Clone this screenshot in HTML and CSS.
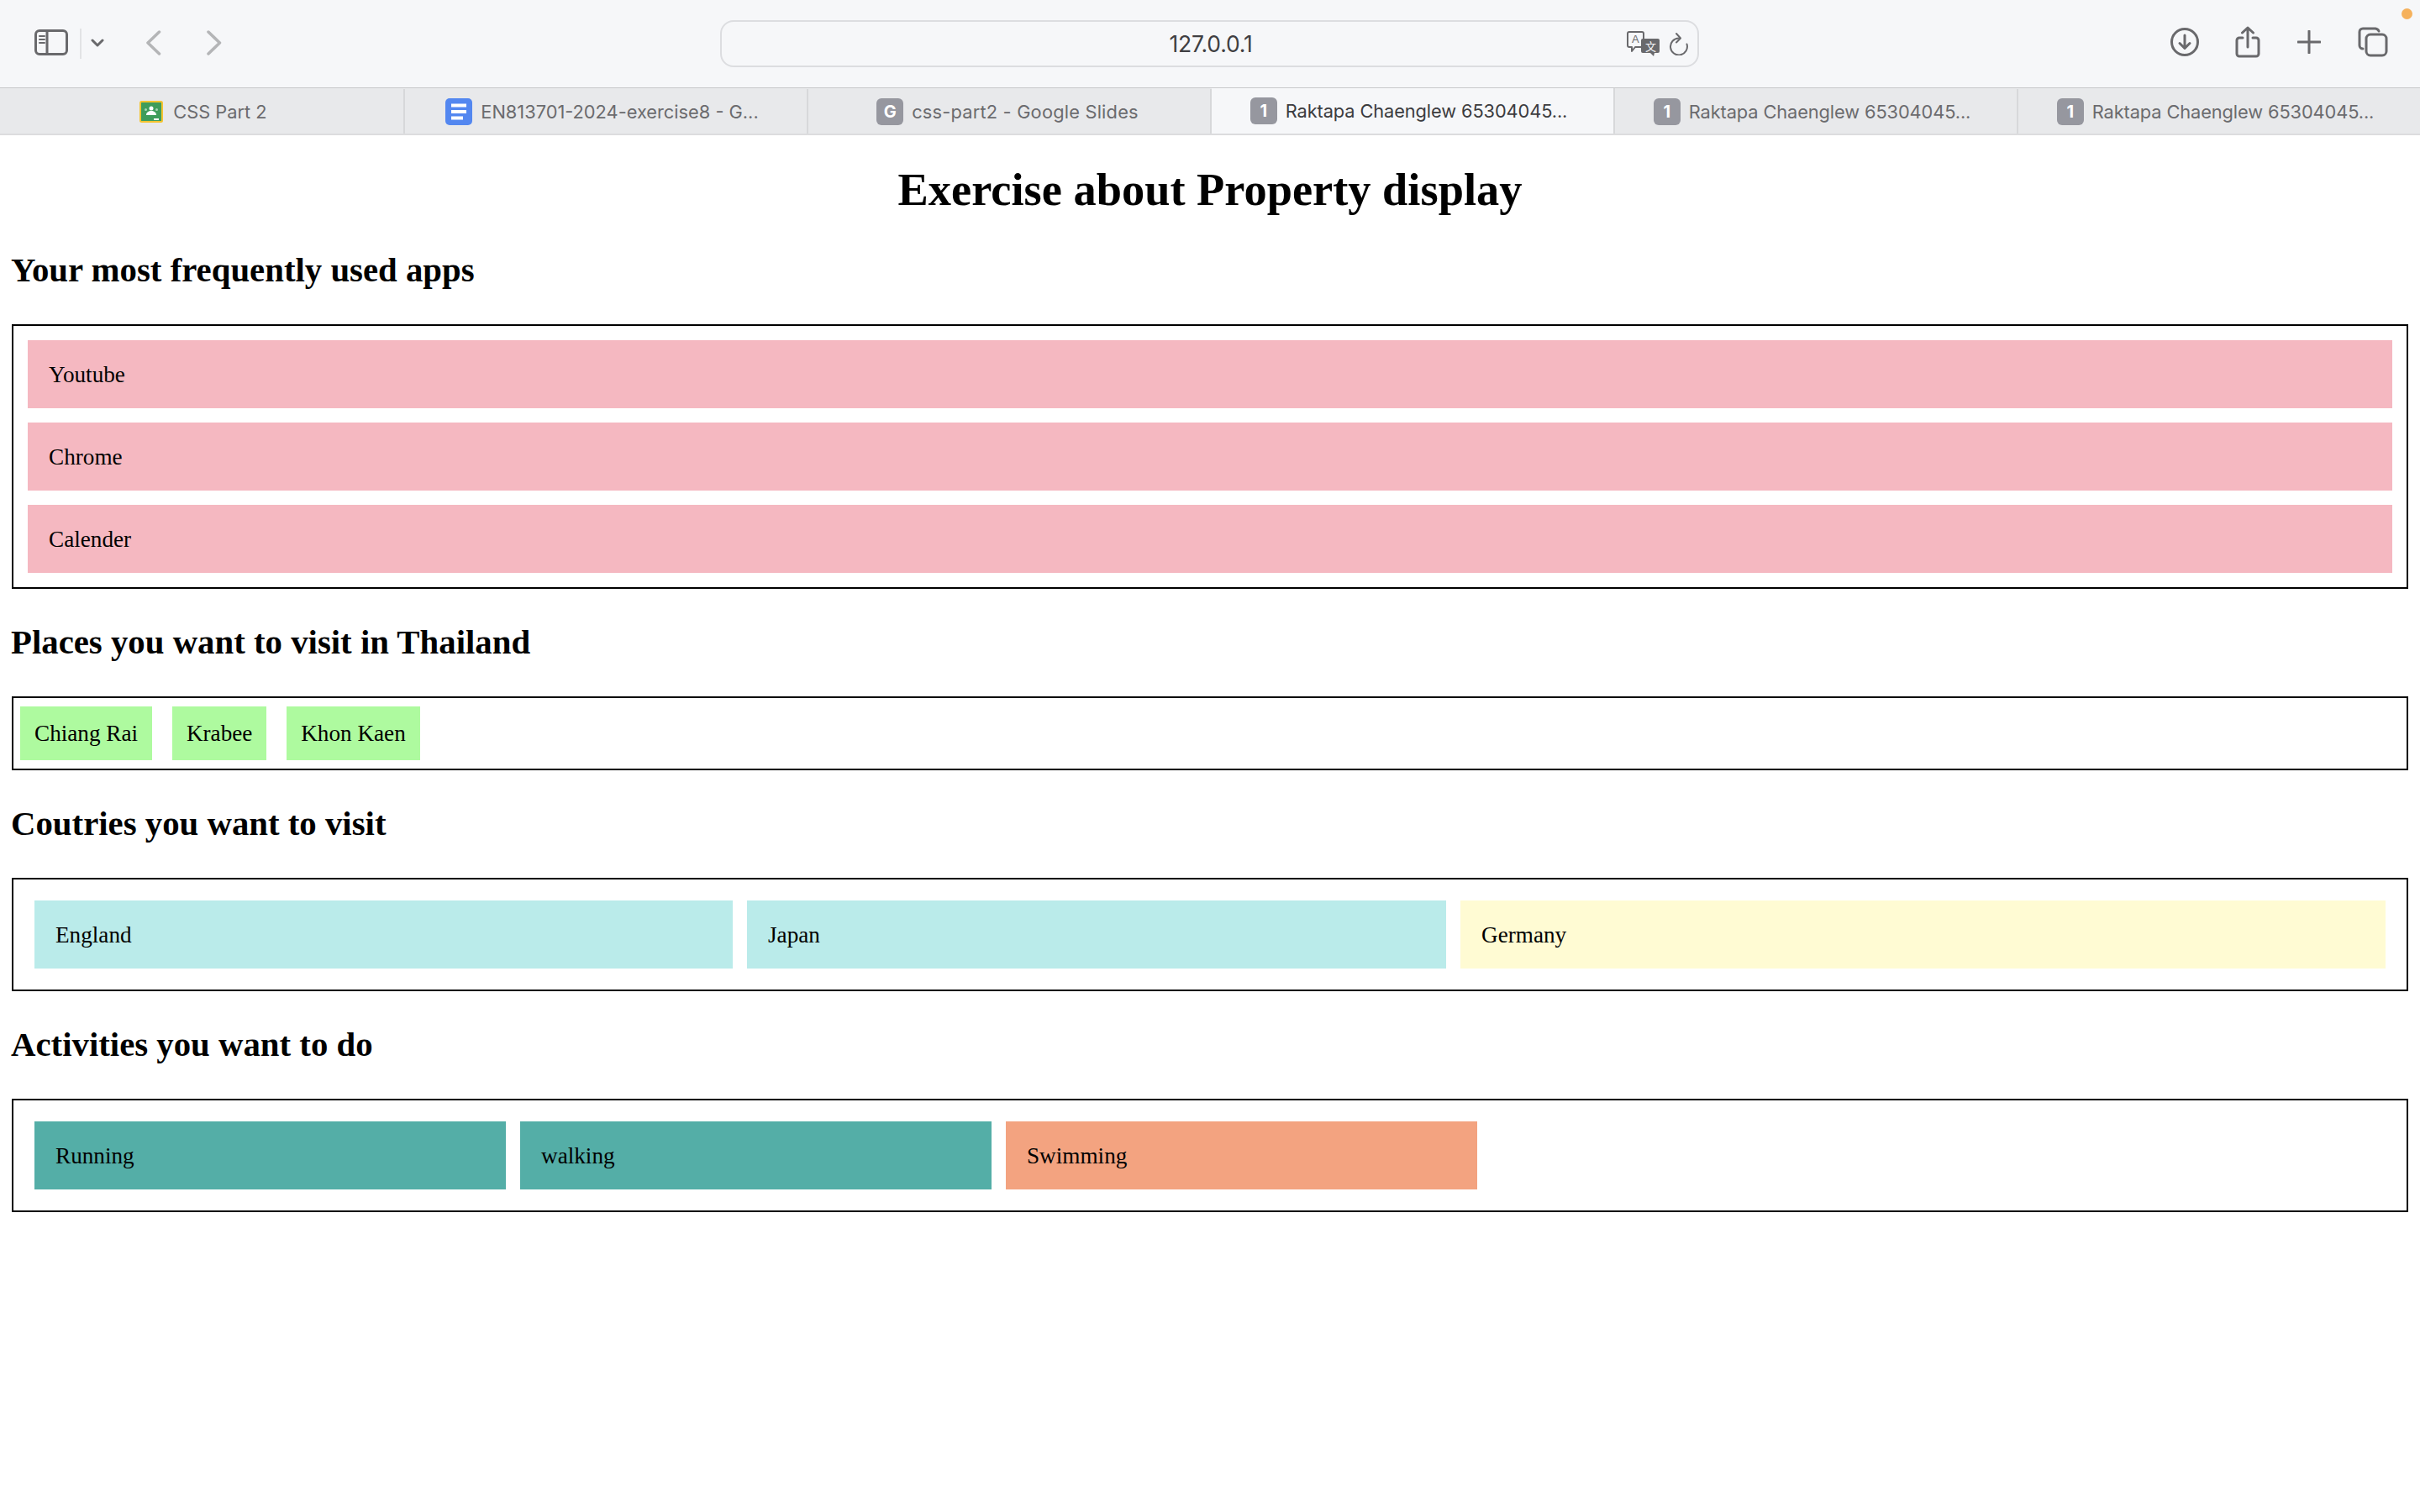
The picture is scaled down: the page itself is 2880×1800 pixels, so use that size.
FILE: index.html
```html
<!DOCTYPE html>
<html lang="en">
<head>
<meta charset="utf-8">
<title>Exercise about Property display</title>
<link rel="stylesheet" href="styles.css">
</head>
<body>
<header class="toolbar">
  <div class="nav">
    <svg class="ic-sidebar" width="40" height="31" viewBox="0 0 40 31"><rect x="1.5" y="1.5" width="37" height="28" rx="4.5" class="st"/><path d="M15 2v27" class="st"/><path d="M6 8h6M6 12h6M6 16h6" class="st thin"/></svg>
    <span class="divider"></span>
    <svg class="ic-chevron" width="16" height="10" viewBox="0 0 16 10"><path d="M2 2l6 6 6-6" class="st"/></svg>
    <svg class="ic-back" width="18" height="30" viewBox="0 0 18 30"><path d="M15.500 2L2 15l13.500 13" class="st dim"/></svg>
    <svg class="ic-forward" width="18" height="30" viewBox="0 0 18 30"><path d="M2 2l13.500 13L2 28" class="st dim"/></svg>
  </div>
  <div class="urlbar">
    <span class="url">127.0.0.1</span>
    <svg class="ic-translate" width="40" height="30" viewBox="0 0 40 30"><path d="M3 1h15a2 2 0 0 1 2 2v14a2 2 0 0 1-2 2h-8l-4 5v-5H3a2 2 0 0 1-2-2V3a2 2 0 0 1 2-2z" class="st thin"/><text x="6" y="14" class="tr-a">A</text><path d="M19 9h18a2 2 0 0 1 2 2v13a2 2 0 0 1-2 2h-4l-1 4-4-4h-9a2 2 0 0 1-2-2V11a2 2 0 0 1 2-2z" class="fill"/><text x="22" y="23" class="tr-b">文</text></svg>
    <svg class="ic-reload" width="24" height="28" viewBox="0 0 24 28"><path d="M12 7.500a10 10 0 1 0 9.500 7" class="st thin"/><path d="M9 2l5 5.500-5 5" class="st thin"/></svg>
  </div>
  <div class="actions">
    <svg class="ic-download" width="36" height="36" viewBox="0 0 36 36"><circle cx="18" cy="18" r="15.5" class="st"/><path d="M18 10v15M12 19.500l6 6 6-6" class="st"/></svg>
    <svg width="30" height="38" viewBox="0 0 30 38"><path d="M9 14H5a3 3 0 0 0-3 3v16a3 3 0 0 0 3 3h20a3 3 0 0 0 3-3V17a3 3 0 0 0-3-3h-4" class="st"/><path d="M15 25V2M8.500 8L15 2l6.500 6" class="st"/></svg>
    <svg width="28" height="28" viewBox="0 0 28 28"><path d="M14 1v26M1 14h26" class="st"/></svg>
    <svg width="36" height="36" viewBox="0 0 36 36"><path d="M6 26a4 4 0 0 1-4-4V6a4 4 0 0 1 4-4h15a5 5 0 0 1 4 3" class="st"/><rect x="10" y="9" width="24" height="25" rx="5" class="st"/></svg>
  </div>
  <span class="dot"></span>
</header>
<nav class="tabs">
  <div class="tab first">
    <svg class="fav-class" width="28" height="26" viewBox="0 0 28 26"><rect x="1" y="1" width="26" height="24" rx="1.500" class="cl-bg"/><circle cx="14" cy="9" r="2.500" class="cl-w"/><path d="M8 17c0-3.500 3-5 6-5s6 1.500 6 5z" class="cl-w"/><circle cx="7.500" cy="10.500" r="1.500" class="cl-d"/><circle cx="20.500" cy="10.500" r="1.500" class="cl-d"/><rect x="17" y="21" width="6" height="2" class="cl-w"/></svg>
    <span class="title">CSS Part 2</span>
  </div>
  <div class="tab shift">
    <svg class="fav" width="32" height="32" viewBox="0 0 32 32"><rect width="32" height="32" rx="5" class="doc-bg"/><path d="M7 6.500h18v4H7zM7 14h18v4H7zM7 21.500h14v4H7z" class="cl-w"/></svg>
    <span class="title">EN813701-2024-exercise8 - G...</span>
  </div>
  <div class="tab shift-small">
    <span class="fav-letter">G</span>
    <span class="title wide">css-part2 - Google Slides</span>
  </div>
  <div class="tab active shift">
    <span class="fav-letter">1</span>
    <span class="title tight">Raktapa Chaenglew 65304045...</span>
  </div>
  <div class="tab shift">
    <span class="fav-letter">1</span>
    <span class="title tight">Raktapa Chaenglew 65304045...</span>
  </div>
  <div class="tab last shift">
    <span class="fav-letter">1</span>
    <span class="title tight">Raktapa Chaenglew 65304045...</span>
  </div>
</nav>
<main class="page">
  <h1>Exercise about Property display</h1>
  <h2>Your most frequently used apps</h2>
  <section class="box stack">
    <div class="item pink">Youtube</div>
    <div class="item pink">Chrome</div>
    <div class="item pink">Calender</div>
  </section>
  <h2>Places you want to visit in Thailand</h2>
  <section class="box inline">
    <div class="chip">Chiang Rai</div>
    <div class="chip">Krabee</div>
    <div class="chip">Khon Kaen</div>
  </section>
  <h2>Coutries you want to visit</h2>
  <section class="box grid countries">
    <div class="item cyan">England</div>
    <div class="item cyan">Japan</div>
    <div class="item yellow">Germany</div>
  </section>
  <h2>Activities you want to do</h2>
  <section class="box grid activities">
    <div class="item teal">Running</div>
    <div class="item teal">walking</div>
    <div class="item orange">Swimming</div>
  </section>
</main>
</body>
</html>
```
FILE: styles.css
```css
* { box-sizing: border-box; }
html, body { margin: 0; padding: 0; background: #fff; }
body { width: 2880px; height: 1800px; overflow: hidden; font-family: "Liberation Serif", "Times New Roman", serif; color: #000; }

.toolbar { position: relative; height: 105px; background: #f6f7f9; border-bottom: 1px solid #c8c9cb; display: flex; align-items: flex-start; }
.st { fill: none; stroke: #69696c; stroke-width: 3; stroke-linecap: round; stroke-linejoin: round; }
.st.thin { stroke-width: 2; }
.st.dim { stroke: #b4b5b7; stroke-width: 3.500; }
.fill { fill: #69696c; }

.nav { width: 857px; height: 104px; flex: none; display: flex; align-items: flex-start; }
.ic-sidebar { margin: 35px 0 0 41px; flex: none; }
.divider { width: 2px; height: 36px; margin: 34px 0 0 14px; background: #e2e3e5; flex: none; }
.ic-chevron { margin: 46px 0 0 11px; flex: none; }
.ic-back { margin: 36px 0 0 50px; flex: none; }
.ic-forward { margin: 36px 0 0 54px; flex: none; }

.urlbar { position: relative; width: 1165px; height: 56px; margin-top: 24px; flex: none; border: 2px solid #dcdde0; border-radius: 16px; background: #f6f7f9; display: flex; align-items: center; justify-content: center; }
.url { font-family: Inter, "Liberation Sans", sans-serif; font-size: 26.500px; letter-spacing: -0.2px; color: #3f3f42; padding-left: 3px; }
.ic-translate { position: absolute; right: 44px; top: 11px; }
.ic-reload { position: absolute; right: 10px; top: 12px; }
.tr-a { font-family: "Liberation Sans", sans-serif; font-size: 13px; fill: #69696c; }
.tr-b { font-family: "Noto Sans CJK SC", sans-serif; font-size: 13px; fill: #f6f7f9; }

.actions { position: absolute; right: 38px; top: 31px; display: flex; align-items: center; gap: 44px; }
.actions svg { flex: none; }
.actions .ic-download { margin-right: -2px; }
.dot { position: absolute; left: 2858px; top: 10px; width: 13px; height: 13px; border-radius: 50%; background: #f5b15c; }

.tabs { height: 56px; display: flex; padding-top: 1px; background: #e8e9eb; border-bottom: 2px solid #dcdcde; }
.tab { width: 480px; flex: none; display: flex; align-items: center; justify-content: center; gap: 10px; border-right: 2px solid #d7d8da; }
.tab.first { width: 482px; padding-left: 4px; }
.tab.shift { padding-right: 9px; }
.tab.shift-small { padding-right: 4px; }
.tab.last { border-right: 0; flex: 1; }
.tab.active { background: #f6f7f9; margin-top: -1px; }
.title { font-family: Inter, "Liberation Sans", sans-serif; font-size: 21.800px; color: #6b6b6e; white-space: nowrap; }
.title.tight { letter-spacing: -0.1px; }
.title.wide { letter-spacing: 0.2px; }
.tab.active .title { color: #3c3c3f; }
.fav, .fav-class { flex: none; }
.fav-class { margin-right: 2px; }
.fav-letter { width: 32px; height: 32px; flex: none; border-radius: 6px; background: #96979f; color: #fff; font-family: Inter, "Liberation Sans", sans-serif; font-weight: 700; font-size: 20px; display: flex; align-items: center; justify-content: center; }
.cl-bg { fill: #3f9d5b; stroke: #f4c430; stroke-width: 2; }
.cl-w { fill: #fff; }
.cl-d { fill: #a9d6b5; }
.doc-bg { fill: #5387f0; }

.page { padding: 0 14px; }
h1 { margin: 34px 0 40px; font-size: 54.400px; line-height: 63px; text-align: center; font-weight: 700; }
h2 { margin: 39.500px 0 41.400px -1px; font-size: 40.800px; line-height: 47px; font-weight: 700; }
h1 + h2 { margin-top: 0; }

.box { border: 2px solid #000; }
.item { height: 81px; padding: 0 25px; font-size: 27.200px; line-height: 82px; }
.stack { display: flex; flex-direction: column; gap: 17px; padding: 17px; }
.inline { display: flex; gap: 23.800px; padding: 10px 8px; }
.chip { height: 64px; padding: 0 17px; font-size: 27.200px; line-height: 65px; background: #aefa9f; }
.grid { display: grid; gap: 17px; padding: 25px; }
.countries { grid-template-columns: 831px 832px 1fr; }
.activities { grid-template-columns: repeat(3, 561px); }

.pink { background: #f5b8c1; }
.cyan { background: #baebea; }
.yellow { background: #fffbd3; }
.teal { background: #54aea7; }
.orange { background: #f3a380; }
```
